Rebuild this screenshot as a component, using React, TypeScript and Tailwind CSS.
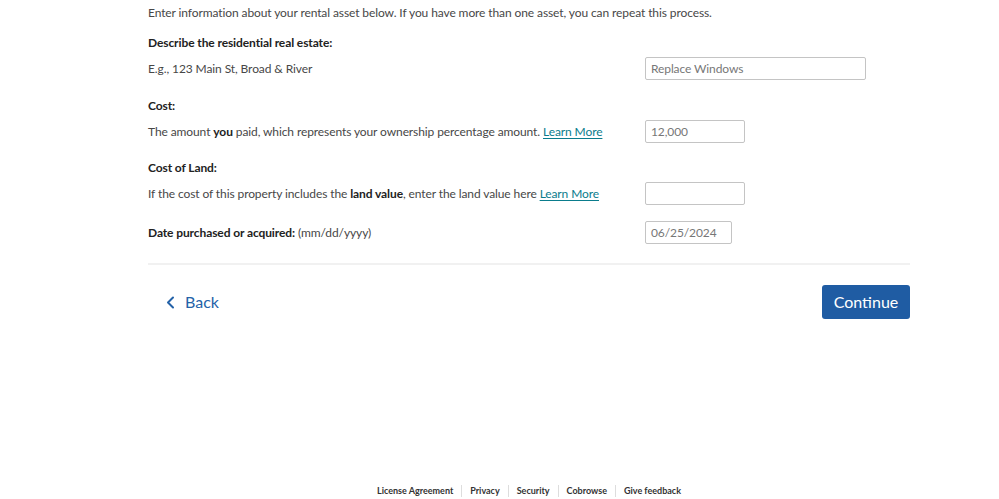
import React from "react";

const font = { fontFamily: "Lato, 'Open Sans', sans-serif" };

function LearnMore() {
  return (
    <a href="#" className="text-[#0a7c8c] underline underline-offset-2">
      Learn More
    </a>
  );
}

function Field({
  label,
  children,
  input,
  top,
}: {
  label: React.ReactNode;
  children: React.ReactNode;
  input: React.ReactNode;
  top: string;
}) {
  return (
    <div className={`flex flex-col ${top}`}>
      <span className="font-bold text-[#222] leading-[18px]">{label}</span>
      <div className="mt-[5px] flex items-center">
        <div className="flex-1">{children}</div>
        <div className="w-[265px]">{input}</div>
      </div>
    </div>
  );
}

function Box({ w, value }: { w: string; value?: string }) {
  return (
    <div className={`${w} h-[23px] border border-[#c4c4c4] rounded-[2px] px-[5px] flex items-center text-[#777]`}>
      {value}
    </div>
  );
}

export default function App() {
  return (
    <div className="w-[999px] h-[499px] bg-white flex flex-col text-[12px] tracking-[-0.1px] text-[#474747]" style={font}>
      <div className="ml-[148px] w-[762px] flex flex-col">
        <p className="mt-[4px] leading-[18px]">
          Enter information about your rental asset below. If you have more than one asset, you can repeat this process.
        </p>

        <Field top="mt-[12px]" label="Describe the residential real estate:" input={<Box w="w-[221px]" value="Replace Windows" />}>
          E.g., 123 Main St, Broad &amp; River
        </Field>

        <Field top="mt-[17px]" label="Cost:" input={<Box w="w-[100px]" value="12,000" />}>
          The amount <b className="text-[#222]">you</b> paid, which represents your ownership percentage amount.{" "}
          <LearnMore />
        </Field>

        <Field top="mt-[16px]" label="Cost of Land:" input={<Box w="w-[100px]" />}>
          If the cost of this property includes the <b className="text-[#222]">land value</b>, enter the land value here{" "}
          <LearnMore />
        </Field>

        <div className="flex mt-[16px] items-center">
          <div className="flex-1">
            <span className="font-bold text-[#222]">Date purchased or acquired:</span> (mm/dd/yyyy)
          </div>
          <div className="w-[265px]">
            <Box w="w-[87px]" value="06/25/2024" />
          </div>
        </div>

        <div className="mt-[19px] h-[2px] bg-[#f1f1f1]" />

        <div className="mt-[20px] flex items-center justify-between">
          <button className="ml-[18px] flex items-center gap-[10px] text-[#2462a8] text-[16px] tracking-normal">
            <svg width="9" height="13" viewBox="0 0 9 13" fill="none">
              <path d="M7 1.5 2 6.5l5 5" stroke="#2462a8" strokeWidth="2" strokeLinecap="round" strokeLinejoin="round" />
            </svg>
            Back
          </button>
          <button className="w-[88px] h-[34px] rounded-[3px] bg-[#1f5ca3] text-white text-[16px] tracking-normal">
            Continue
          </button>
        </div>
      </div>

      <div className="mt-auto mb-0 h-[16px] ml-[148px] w-[762px] flex justify-center items-center text-[9px] font-bold text-[#333] tracking-normal">
        <span className="px-[8px]">License Agreement</span>
        <span className="w-px h-[12px] bg-[#ddd]" />
        <span className="px-[8px]">Privacy</span>
        <span className="w-px h-[12px] bg-[#ddd]" />
        <span className="px-[8px]">Security</span>
        <span className="w-px h-[12px] bg-[#ddd]" />
        <span className="px-[8px]">Cobrowse</span>
        <span className="w-px h-[12px] bg-[#ddd]" />
        <span className="px-[8px]">Give feedback</span>
      </div>
    </div>
  );
}
